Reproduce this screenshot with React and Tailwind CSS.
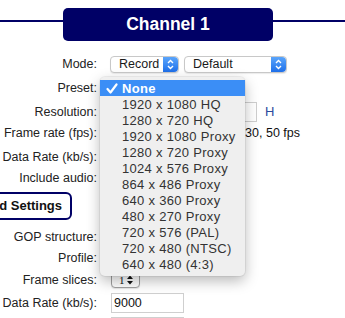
import { useState } from "react";

const presets = [
  "None",
  "1920 x 1080 HQ",
  "1280 x 720 HQ",
  "1920 x 1080 Proxy",
  "1280 x 720 Proxy",
  "1024 x 576 Proxy",
  "864 x 486 Proxy",
  "640 x 360 Proxy",
  "480 x 270 Proxy",
  "720 x 576 (PAL)",
  "720 x 480 (NTSC)",
  "640 x 480 (4:3)",
];

const Stepper = () => (
  <span className="flex h-full w-[15px] items-center justify-center rounded-r-[4px] bg-gradient-to-b from-[#5aa5fb] to-[#1e6fe9]">
    <svg width="7" height="11" viewBox="0 0 7 11" fill="none" stroke="white" strokeWidth="1.4">
      <path d="M1 4 L3.5 1.5 L6 4" />
      <path d="M1 7 L3.5 9.5 L6 7" />
    </svg>
  </span>
);

const MacSelect = ({ value, width }) => (
  <div
    className={`flex h-[17px] shrink-0 items-center justify-between rounded-[4px] border border-[#c8c8c8] bg-white shadow-[0_1px_1px_rgba(0,0,0,0.08)] ${width}`}
  >
    <span className="pl-[8px] text-[12.5px] leading-none text-[#1a1a1a]">{value}</span>
    <Stepper />
  </div>
);

const Row = ({ label, height, children }) => (
  <div className={`flex items-center ${height}`}>
    <div className="w-[97px] shrink-0 text-right text-[12.5px] text-[#222]">{label}</div>
    <div className="ml-[13px] flex shrink-0 items-center">{children}</div>
  </div>
);

const App = () => {
  const [selected] = useState("None");

  return (
    <div
      className="relative h-[318px] w-[345px] overflow-hidden bg-white"
      style={{ fontFamily: '"Liberation Sans", Arial, sans-serif' }}
    >
      {/* header */}
      <div className="flex items-start pt-[8px]">
        <div className="mt-[12px] h-[2px] w-[63px] bg-[#000066]" />
        <div className="flex h-[33px] w-[210px] items-center justify-center rounded-[5px] bg-[#000066] text-[17.5px] font-bold text-white">
          Channel 1
        </div>
        <div className="mt-[12px] h-[2px] flex-1 bg-[#000066]" />
      </div>

      <div className="mt-[11px]">
        <Row label="Mode:" height="h-[24px]">
          <MacSelect value="Record" width="w-[69px]" />
          <div className="ml-[5px]">
            <MacSelect value="Default" width="w-[103px]" />
          </div>
        </Row>
        <Row label="Preset:" height="h-[24px]">
          <MacSelect value="" width="w-[135px]" />
        </Row>
        <Row label="Resolution:" height="h-[24px]">
          <div className="h-[20px] w-[60px] border border-[#cfcfcf]" />
          <span className="w-[18px]" />
          <div className="h-[20px] w-[69px] border border-[#cfcfcf]" />
          <span className="ml-[8px] text-[13px] text-[#2b4a9e]">H</span>
        </Row>
        <Row label="Frame rate (fps):" height="h-[18px]">
          <span className="w-[190px] text-right text-[12.5px] text-[#111]">25, 30, 50 fps</span>
        </Row>
        <Row label="Data Rate (kb/s):" height="h-[30px]">
          <div className="h-[20px] w-[73px] border border-[#cfcfcf]" />
        </Row>
        <Row label="Include audio:" height="h-[12px]">
          <span className="h-[12px] w-[12px] rounded-[2px] border border-[#b8b8b8]" />
        </Row>

        <button className="ml-[-65px] mt-[8px] h-[28px] rounded-[6px] border-2 border-[#000066] bg-white px-[8px] text-[13px] font-bold text-[#111]">
          Advanced Settings
        </button>

        <div className="mt-[6px]">
          <Row label="GOP structure:" height="h-[22px]">
            <MacSelect value="" width="w-[80px]" />
          </Row>
          <Row label="Profile:" height="h-[20px]">
            <MacSelect value="" width="w-[80px]" />
          </Row>
          <Row label="Frame slices:" height="h-[24px]">
            <div className="ml-[1px] grid h-[16px] w-[29px] grid-cols-[1fr_auto] items-center rounded-[4px] border border-[#a0a0a0] bg-white pl-[7px] pr-[6px] shadow-[0_1px_1px_rgba(0,0,0,0.1)]">
              <span
                className="text-[11px] leading-none text-[#111]"
                style={{ fontFamily: '"Liberation Serif", serif' }}
              >
                1
              </span>
              <svg width="6" height="10" viewBox="0 0 6 10" fill="#111">
                <path d="M0 4 L3 0.5 L6 4 Z" />
                <path d="M0 6 L3 9.5 L6 6 Z" />
              </svg>
            </div>
          </Row>
          <Row label="Data Rate (kb/s):" height="h-[22px]">
            <input
              readOnly
              value="9000"
              className="ml-[1px] h-[20px] w-[73px] border border-[#cfcfcf] px-[2px] text-[12.5px] text-[#111] outline-none"
            />
          </Row>
          <div className="ml-[111px] mt-[3px] h-[20px] w-[73px] border border-[#cfcfcf]" />
        </div>
      </div>

      {/* open preset menu */}
      <div className="absolute left-[100px] top-[77px] w-[145px] rounded-[5px] bg-[#efefef] pb-[4px] pt-[3px] shadow-[0_5px_14px_rgba(0,0,0,0.28)] ring-1 ring-black/5">
        {presets.map((preset) => {
          const active = preset === selected;
          return (
            <div
              key={preset}
              className={`flex h-[16px] items-center text-[13px] leading-none tracking-[0.3px] ${
                active ? "bg-[#3b8ef6] text-white" : "text-[#333]"
              }`}
            >
              <span className="flex w-[22px] justify-center pl-[2px]">
                {active && (
                  <svg width="12" height="11" viewBox="0 0 12 11" fill="none" stroke="white" strokeWidth="2.2" strokeLinecap="round" strokeLinejoin="round">
                    <path d="M1.5 6 L4.5 9.5 L10.5 1.5" />
                  </svg>
                )}
              </span>
              <span className={active ? "font-semibold" : ""}>{preset}</span>
            </div>
          );
        })}
      </div>
    </div>
  );
};

export default App;
